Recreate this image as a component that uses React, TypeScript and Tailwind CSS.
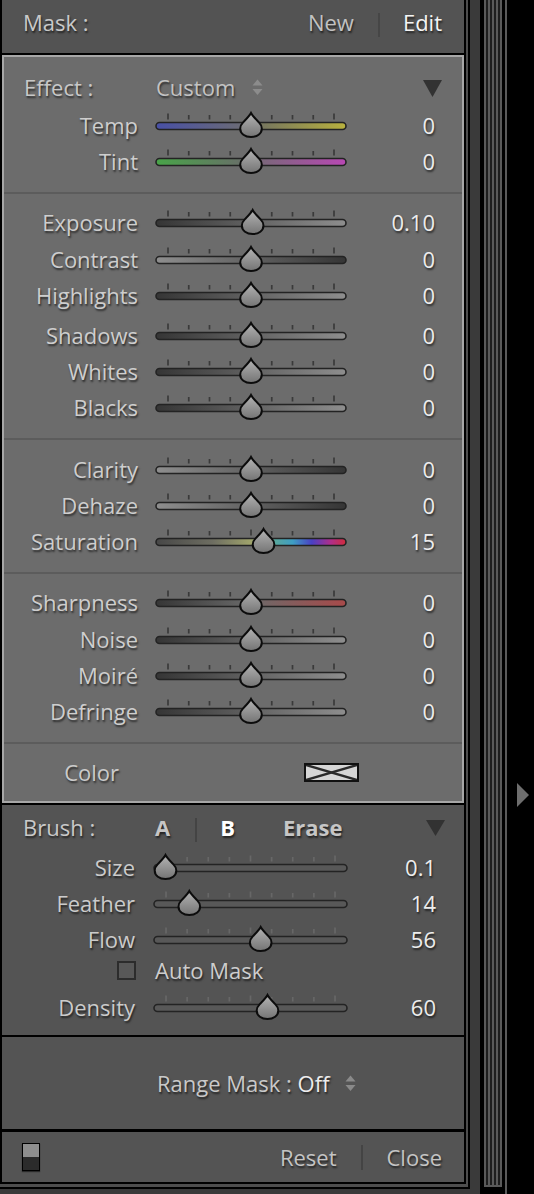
import { useId } from "react";

type Stop = [number, string];

// track fills
const DARK_LIGHT: Stop[] = [[0, "#353535"], [1, "#8e8e8e"]];
const LIGHT_DARK: Stop[] = [[0, "#8e8e8e"], [1, "#353535"]];
const BRUSH: Stop[] = [[0, "#585858"], [1, "#585858"]];
const TEMP: Stop[] = [[0, "#4850a6"], [0.45, "#6b6b76"], [0.55, "#76765f"], [1, "#b8b13e"]];
const TINT: Stop[] = [[0, "#48a448"], [0.45, "#687068"], [0.55, "#7a687a"], [1, "#b848b4"]];
const SATURATION: Stop[] = [
  [0, "#474747"],
  [0.3, "#6e6e62"],
  [0.5, "#a0a46c"],
  [0.62, "#5aa89a"],
  [0.72, "#3e9ec4"],
  [0.82, "#4a40c4"],
  [0.92, "#b02e8a"],
  [1, "#d22c3c"],
];
const SHARPNESS: Stop[] = [[0, "#363636"], [0.5, "#6a6a6a"], [1, "#a84a4a"]];

const THUMB =
  "M11 0.5 C12.3 3.2 15.8 6.6 18.7 9.6 C20.8 11.7 21.8 13.8 21.8 16 C21.8 21.2 17 24.5 11 24.5 C5 24.5 0.2 21.2 0.2 16 C0.2 13.8 1.2 11.7 3.3 9.6 C6.2 6.6 9.7 3.2 11 0.5 Z";

interface SliderProps {
  width: number;
  value: number;
  stops: Stop[];
  tick: string;
}

// Lightroom style slider: ticks, rounded track and drop shaped thumb
const Slider = ({ width, value, stops, tick }: SliderProps) => {
  const uid = useId().replace(/[^a-zA-Z0-9]/g, "");
  const cy = 19;
  const tx = 12.5 + value * (width - 25);
  const step = (width - 26) / 8;

  return (
    <svg width={width} height={36} viewBox={`0 0 ${width} 36`} className="block shrink-0 overflow-visible">
      <defs>
        <linearGradient id={`t${uid}`} x1="0" y1="0" x2="1" y2="0">
          {stops.map(([o, c]) => (
            <stop key={o} offset={o} stopColor={c} />
          ))}
        </linearGradient>
        <linearGradient id={`k${uid}`} x1="0" y1="0" x2="0" y2="1">
          <stop offset="0" stopColor="#b4b4b4" />
          <stop offset="1" stopColor="#747474" />
        </linearGradient>
      </defs>
      {Array.from({ length: 9 }, (_, i) => {
        const x = 13 + i * step;
        const long = i === 0 || i === 4 || i === 8;
        return (
          <line
            key={i}
            x1={x}
            x2={x}
            y1={long ? cy - 12.5 : cy - 11}
            y2={cy - 6.5}
            stroke={tick}
            strokeWidth={1.7}
          />
        );
      })}
      <rect
        x={1}
        y={cy - 3.5}
        width={width - 2}
        height={7}
        rx={3.5}
        fill={`url(#t${uid})`}
        stroke="#232323"
        strokeWidth={1.6}
      />
      <path
        transform={`translate(${tx - 11} ${cy - 13.5})`}
        d={THUMB}
        fill={`url(#k${uid})`}
        stroke="#0c0c0c"
        strokeWidth={2}
      />
    </svg>
  );
};

interface RowProps {
  label: string;
  value: string;
  pos?: number;
  stops: Stop[];
  className?: string;
}

// slider row inside the light effect panel
const AdjustRow = ({ label, value, pos = 0.5, stops, className = "" }: RowProps) => (
  <div className={`flex h-[36px] items-start ${className}`}>
    <div className="w-[134px] text-right text-[#cecece]">{label}</div>
    <div className="ml-[17px]">
      <Slider width={192} value={pos} stops={stops} tick="#3a3a3a" />
    </div>
    <div className="w-[88px] text-right text-[#ededed]">{value}</div>
  </div>
);

// slider row inside the darker brush panel
const BrushRow = ({ label, value, pos = 0.5, className = "" }: Omit<RowProps, "stops">) => (
  <div className={`flex items-start ${className}`}>
    <div className="w-[133px] text-right text-[#cbcbcb]">{label}</div>
    <div className="ml-[18px]">
      <Slider width={195} value={pos} stops={BRUSH} tick="#676767" />
    </div>
    <div className="w-[88px] text-right text-[#ededed]">{value}</div>
  </div>
);

const UpDown = ({ className, color }: { className: string; color: string }) => (
  <svg width="11" height="17" viewBox="0 0 11 17" className={className}>
    <polygon points="5.5,0.5 10.5,6.5 0.5,6.5" fill={color} />
    <polygon points="0.5,10 10.5,10 5.5,16" fill={color} />
  </svg>
);

const DownTriangle = ({ className, w, h }: { className: string; w: number; h: number }) => (
  <svg width={w} height={h} viewBox={`0 0 ${w} ${h}`} className={className}>
    <polygon points={`0,0 ${w},0 ${w / 2},${h}`} fill="#323232" />
  </svg>
);

const Separator = () => <div className="border-t-2 border-[#5c5c5c]" />;

export default function App() {
  const stripes = ["g", "d", "g", "d", "g", "d", "g", "d", "g"];

  return (
    <div className="flex h-[1194px] w-[534px] overflow-hidden bg-black font-['Open_Sans',sans-serif] text-[22px] leading-[36px] [text-shadow:1px_2px_2px_rgba(0,0,0,0.6)]">
      {/* Left panel with its nested frame */}
      <div className="h-full w-[480px] bg-[#3a3a3a]">
        <div className="w-[470px] border-r-2 border-b-2 border-black">
          <div className="border-r-2 border-b-[3px] border-[#4e4e4e]">
            <div className="flex h-[1184px] flex-col border-l-2 border-r-2 border-b-2 border-black">
              {/* Mask header */}
              <div className="flex h-[55px] shrink-0 items-start border-b-2 border-black bg-[#535353] pt-[4px] pr-[22px] pl-[21px] text-[#c9c9c9]">
                <span>Mask :</span>
                <span className="ml-auto text-[#c2c2c2]">New</span>
                <span className="mt-[9px] mr-[23px] ml-[24px] h-[24px] w-[2px] bg-[#464646]" />
                <span className="text-[#f4f4f4]">Edit</span>
              </div>

              {/* Effect panel */}
              <div className="shrink-0 border-b-2 border-black">
                <div className="h-[748px] border-2 border-[#a7a7a7] bg-[#6c6c6c]">
                  <div className="pt-[12px] pb-[13px]">
                    <div className="flex h-[38px] items-start pr-[20px] pl-[20px]">
                      <span className="w-[132px] text-[#c8c8c8]">Effect :</span>
                      <span className="text-[#c3c3c3]">Custom</span>
                      <UpDown className="mt-[10px] ml-[17px]" color="#8c8c8c" />
                      <DownTriangle className="mt-[11px] ml-auto" w={19} h={17} />
                    </div>
                    <AdjustRow label="Temp" value="0" stops={TEMP} />
                    <AdjustRow label="Tint" value="0" stops={TINT} />
                  </div>

                  <Separator />
                  <div className="pt-[10px] pb-[13px]">
                    <AdjustRow label="Exposure" value="0.10" pos={0.51} stops={DARK_LIGHT} />
                    <AdjustRow label="Contrast" value="0" stops={LIGHT_DARK} className="mt-[1px]" />
                    <AdjustRow label="Highlights" value="0" stops={DARK_LIGHT} />
                    <AdjustRow label="Shadows" value="0" stops={DARK_LIGHT} className="mt-[4px]" />
                    <AdjustRow label="Whites" value="0" stops={DARK_LIGHT} />
                    <AdjustRow label="Blacks" value="0" stops={DARK_LIGHT} />
                  </div>

                  <Separator />
                  <div className="pt-[11px] pb-[13px]">
                    <AdjustRow label="Clarity" value="0" stops={LIGHT_DARK} />
                    <AdjustRow label="Dehaze" value="0" stops={LIGHT_DARK} />
                    <AdjustRow label="Saturation" value="15" pos={0.575} stops={SATURATION} />
                  </div>

                  <Separator />
                  <div className="pt-[10px] pb-[13px]">
                    <AdjustRow label="Sharpness" value="0" stops={SHARPNESS} />
                    <AdjustRow label="Noise" value="0" stops={DARK_LIGHT} className="mt-[1px]" />
                    <AdjustRow label="Moiré" value="0" stops={DARK_LIGHT} />
                    <AdjustRow label="Defringe" value="0" stops={DARK_LIGHT} />
                  </div>

                  <Separator />
                  <div className="pt-[10px]">
                    <div className="flex h-[36px] items-start">
                      <span className="w-[115px] text-right text-[#cbcbcb]">Color</span>
                      <div className="mt-[9px] ml-[185px] h-[19px] w-[55px] border-2 border-[#111] bg-[#d6d6d6] [text-shadow:none]">
                        <svg width="51" height="15" viewBox="0 0 51 15" className="block">
                          <line x1="0" y1="0" x2="51" y2="15" stroke="#2a2a2a" strokeWidth="2.4" />
                          <line x1="0" y1="15" x2="51" y2="0" stroke="#2a2a2a" strokeWidth="2.4" />
                        </svg>
                      </div>
                    </div>
                  </div>
                </div>
              </div>

              {/* Brush panel */}
              <div className="h-[232px] shrink-0 border-b-2 border-black bg-[#545454] pt-[4px]">
                <div className="flex h-[36px] items-start pr-[19px] pl-[21px] font-bold">
                  <span className="w-[132px] font-normal text-[#c9c9c9]">Brush :</span>
                  <span className="text-[#c6c6c6]">A</span>
                  <span className="mt-[9px] mr-[23px] ml-[25px] h-[24px] w-[2px] bg-[#444]" />
                  <span className="text-white">B</span>
                  <span className="ml-[48px] text-[#c6c6c6]">Erase</span>
                  <DownTriangle className="mt-[11px] ml-auto" w={19} h={16} />
                </div>
                <BrushRow label="Size" value="0.1" pos={0} className="mt-[4px] h-[36px]" />
                <BrushRow label="Feather" value="14" pos={0.14} className="h-[36px]" />
                <BrushRow label="Flow" value="56" pos={0.56} className="h-[34px]" />
                <div className="flex h-[34px] items-start">
                  <div className="mt-[6px] ml-[114.5px] h-[19px] w-[19px] border-2 border-[#2c2c2c] bg-[#585858]" />
                  <span className="ml-[19.5px] leading-[30px] text-[#cdcdcd]">Auto Mask</span>
                </div>
                <BrushRow label="Density" value="60" pos={0.6} className="h-[36px]" />
              </div>

              {/* Range mask */}
              <div className="flex h-[95px] shrink-0 items-start border-b-[3px] border-black bg-[#545454] pt-[28px] pl-[155px]">
                <span className="text-[#c9c9c9]">
                  Range Mask : <span className="text-[#ececec]">Off</span>
                </span>
                <UpDown className="mt-[10px] ml-[15px]" color="#8a8a8a" />
              </div>

              {/* Footer */}
              <div className="flex flex-1 items-center bg-[#545454] pr-[22px] pl-[20px] text-[#c4c4c4]">
                <div className="flex h-[28px] w-[18px] flex-col border border-black shadow-[0_1px_1px_rgba(0,0,0,0.5)]">
                  <div className="flex-1 bg-[#8e8e8e]" />
                  <div className="flex-1 bg-[#2b2b2b]" />
                </div>
                <span className="ml-auto">Reset</span>
                <span className="mr-[24px] ml-[24px] h-[25px] w-[2px] bg-[#444]" />
                <span>Close</span>
              </div>
            </div>
          </div>
        </div>
      </div>

      {/* Right edge strips and the panel toggle arrow */}
      <div className="flex h-full flex-1">
        <div className="ml-[4px] flex h-[1187px] border-b-2 border-[#5a5a5a]">
          {stripes.map((s, i) => (
            <div key={i} className={s === "g" ? "w-[2px] bg-[#5a5a5a]" : "w-[2px] bg-[#1e1e1e]"} />
          ))}
        </div>
        <div className="ml-[3px] w-[2px] bg-[#5a5a5a]" />
        <div className="pt-[783px] pl-[10px]">
          <svg width="12" height="24" viewBox="0 0 12 24" className="block">
            <polygon points="0,0 12,12 0,24" fill="#6e6e6e" />
          </svg>
        </div>
      </div>
    </div>
  );
}
